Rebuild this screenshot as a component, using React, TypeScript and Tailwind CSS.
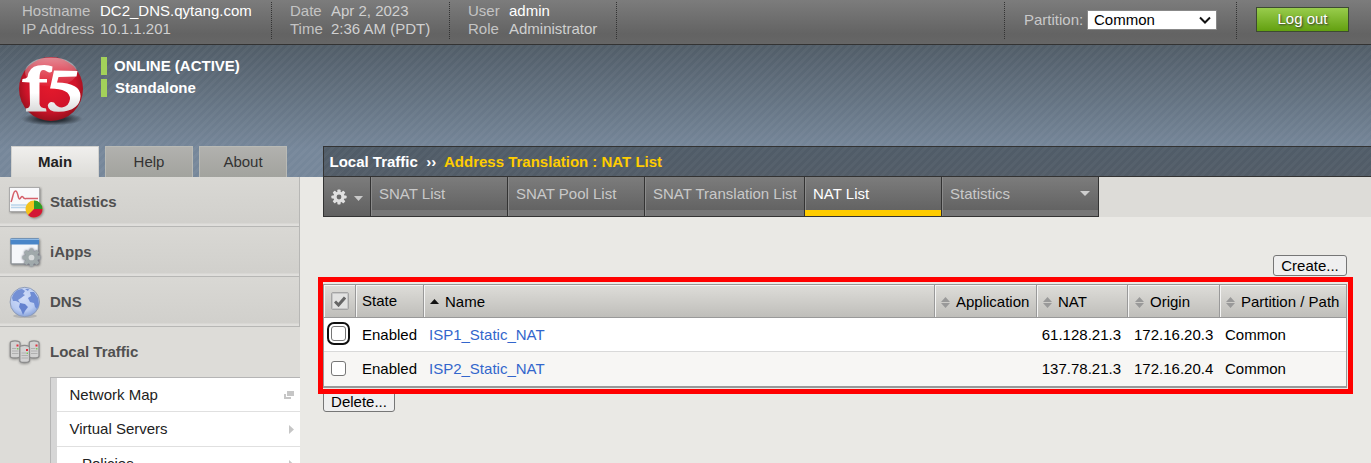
import React from "react";

const font = "font-['Liberation_Sans',Arial,sans-serif]";

function Divider() {
  return <div className="mt-[2px] h-[37px] w-0 shrink-0 border-l border-dotted border-[#333]" />;
}

function Pair({ k, v, kw, strong }: { k: string; v: string; kw: string; strong?: boolean }) {
  return (
    <div className="flex h-[18px] leading-[18px]">
      <span className={`${kw} text-[#c4c4c4]`}>{k}</span>
      <span className={strong ? "text-white" : "text-[#d0d0d0]"}>{v}</span>
    </div>
  );
}

function Logo() {
  return (
    <svg width="70" height="76" viewBox="0 0 70 76">
      <defs>
        <radialGradient id="ball" cx="0.5" cy="0.45" r="0.55">
          <stop offset="0" stopColor="#e51a2c" />
          <stop offset="0.7" stopColor="#d0142a" />
          <stop offset="1" stopColor="#97101c" />
        </radialGradient>
        <linearGradient id="shine" x1="0" y1="0" x2="0" y2="1">
          <stop offset="0" stopColor="#fff" stopOpacity="0.5" />
          <stop offset="1" stopColor="#fff" stopOpacity="0.03" />
        </linearGradient>
        <linearGradient id="ink" x1="0" y1="0" x2="0" y2="1">
          <stop offset="0" stopColor="#fff" />
          <stop offset="0.6" stopColor="#fff" />
          <stop offset="1" stopColor="#d9d9d9" />
        </linearGradient>
        <radialGradient id="shade">
          <stop offset="0.4" stopColor="#20262c" stopOpacity="0.9" />
          <stop offset="1" stopColor="#20262c" stopOpacity="0" />
        </radialGradient>
      </defs>
      <ellipse cx="36" cy="65" rx="31" ry="6.500" fill="url(#shade)" />
      <circle cx="35" cy="35" r="32" fill="url(#ball)" />
      <ellipse cx="35" cy="18" rx="26" ry="14.500" fill="url(#shine)" />
      <path
        d="M6 28L6.500 25Q10 25 11.500 23Q13 13 22 11.500Q31 10 36.500 12.500L36 17.500Q34 19.500 31 17.500Q27 15 25 17Q23.500 19 23.500 25L31 25L31 28.500L23.500 28.500L23.500 50Q24 54 30 54.500L30.500 57.500L10 57.500L10 54.500Q14 54 14 50L13.500 28.500Z"
        fill="url(#ink)"
      />
      <path
        d="M38 16.500L61.500 17L60.500 22.500L42.500 23L41 28.500Q64.500 29 64.500 42Q64 57 43 57.800Q32 58 31.800 51.500Q33 46.500 38 48.500Q41 53.500 46 53.500Q53 52.500 54 45Q54 34.500 34 34.500Z"
        fill="url(#ink)"
      />
    </svg>
  );
}

function StatsIcon() {
  return (
    <svg width="36" height="34" viewBox="0 0 36 34" className="[filter:drop-shadow(1px_1px_1px_rgba(0,0,0,0.35))]">
      <rect x="1.500" y="2.500" width="30" height="24" fill="#f8f9fb" stroke="#aaa" />
      <path d="M3 20H30M3 22.500H30" stroke="#b9d4ea" strokeWidth="1.500" />
      <path d="M3 17C5 13 5 6 7.500 6S10 14 11.500 14S13 10 15 12C16 15 18 13 20 13.500H30" fill="none" stroke="#d5606a" strokeWidth="1.500" />
      <circle cx="26" cy="24" r="8.500" fill="#f3c21c" />
      <path d="M26 24V15.500A8.500 8.500 0 0 1 34.500 24Z" fill="#2c9c28" />
      <path d="M26 24H34.500A8.500 8.500 0 0 1 20 30Z" fill="#d31735" />
    </svg>
  );
}

function Gear({ size, color, hole }: { size: number; color: string; hole: string }) {
  return (
    <svg width={size} height={size} viewBox="-10 -10 20 20">
      {[0, 45, 90, 135].map((a) => (
        <rect key={a} x="-2" y="-9.500" width="4" height="19" rx="1" fill={color} transform={`rotate(${a})`} />
      ))}
      <circle r="7" fill={color} />
      <circle r="3" fill={hole} />
    </svg>
  );
}

function AppsIcon() {
  return (
    <div className="relative h-[34px] w-9">
      <svg width="36" height="34" viewBox="0 0 36 34" className="[filter:drop-shadow(1px_1px_1px_rgba(0,0,0,0.35))]">
        <rect x="3" y="4" width="27.500" height="25" rx="1" fill="#f5f7fa" stroke="#8f9498" strokeWidth="1.500" />
        <rect x="2.500" y="3.500" width="28.500" height="6" fill="#4a86c8" />
        <path d="M2.500 4.500H31" stroke="#8db9e6" />
      </svg>
      <div className="absolute left-[14px] top-[13px] [filter:drop-shadow(0_0_1px_#667)]">
        <Gear size={19} color="#a0a9ab" hole="#d7dadb" />
      </div>
    </div>
  );
}

function GlobeIcon() {
  return (
    <svg width="36" height="34" viewBox="0 0 36 34">
      <defs>
        <radialGradient id="sea" cx="0.45" cy="0.35" r="0.65">
          <stop offset="0" stopColor="#d2def8" />
          <stop offset="0.7" stopColor="#b9cbf2" />
          <stop offset="1" stopColor="#8ba5dc" />
        </radialGradient>
      </defs>
      <ellipse cx="17" cy="31" rx="12" ry="2" fill="#b4b4b4" />
      <circle cx="16.800" cy="17" r="14.700" fill="url(#sea)" stroke="#8f9cb5" />
      <path d="M4 13C5 8 9 4 14 4L17 6L15 9L17 10L13 13L10 15L12 18L8 16L5 16Z" fill="#7490d4" />
      <path d="M12 18L17 19L20 22L17 26L15 30L13 25L11 22Z" fill="#6482cf" />
      <path d="M22 7L26 7L30 13L31 20L29 24L27 22L26 18L22 17L20 13L23 11Z" fill="#6f8cd4" />
      <path d="M17 4L21 4L20 6Z" fill="#7490d4" />
    </svg>
  );
}

function ServersIcon() {
  const box = (x: number, y: number) => (
    <g transform={`translate(${x} ${y})`}>
      <path d="M0.800 16V3Q0.800 0.800 5.500 0.800T10.500 3V16Q10.500 18 5.500 18T0.800 16Z" fill="#d2d2d2" stroke="#8d8d8d" strokeWidth="1.300" />
      <path d="M2.500 8.500H7M2.500 11H9M2.500 13.500H9" stroke="#b0b0b0" />
      <rect x="7" y="4.500" width="2" height="2" fill="#e0303c" />
      <rect x="7.500" y="8" width="1.500" height="1.500" fill="#7dc860" />
    </g>
  );
  return (
    <svg width="36" height="34" viewBox="0 0 36 34" className="[filter:drop-shadow(0_1px_1px_rgba(0,0,0,0.3))]">
      {box(1.5, 5)}
      {box(20.5, 5)}
      {box(11, 9.5)}
    </svg>
  );
}

function SideItem({ icon, label, open }: { icon: React.ReactNode; label: string; open?: boolean }) {
  return (
    <div
      className={
        open
          ? "flex h-[50px] items-center pl-2"
          : "flex h-[50px] items-center border-b border-[#b7b7b5] bg-[linear-gradient(#d9d8d4,#d1d0cc_46px,#dfdedb_47px,#dfdedb)] pl-2"
      }
    >
      {icon}
      <span className="ml-[6px] font-bold text-[#505050]">{label}</span>
    </div>
  );
}

function MenuTab({ label, width, active, arrow }: { label: string; width: string; active?: boolean; arrow?: boolean }) {
  return (
    <div className={`${width} flex h-[39px] shrink-0 flex-col border-r border-[#333]`}>
      <div className={`flex h-[33px] shrink-0 items-center justify-between bg-[linear-gradient(#7c7c7c,#636363)] pl-2 pr-2 shadow-[inset_1px_0_#8b8b8b] ${active ? "text-white" : "text-[#c9c9c9]"}`}>
        <span className="whitespace-nowrap pt-px">{label}</span>
        {arrow && (
          <svg width="10" height="5" viewBox="0 0 10 5">
            <path d="M0 0H10L5 5Z" fill="#cfcfcf" />
          </svg>
        )}
      </div>
      <div className={active ? "h-[6px] shrink-0 bg-[#ffcc00]" : "h-[6px] shrink-0 bg-[#777] shadow-[inset_1px_0_#8b8b8b]"} />
    </div>
  );
}

function Sort() {
  return (
    <svg width="9" height="11" viewBox="0 0 9 11" className="mr-[6px] shrink-0">
      <path d="M0 5L4.500 0L9 5ZM0 6H9L4.500 11Z" fill="#999" />
    </svg>
  );
}

const headCell =
  "flex h-[33px] items-center border-b border-r border-[#999] bg-[linear-gradient(#deddd9,#bfbeba)] shadow-[inset_1px_1px_#f5f5f4] whitespace-nowrap";
const cols = "grid grid-cols-[32px_68px_511px_102px_91px_92px_126px]";

function Row({ name, nat, origin, alt, focus }: { name: string; nat: string; origin: string; alt?: boolean; focus?: boolean }) {
  return (
    <div className={`${cols} h-[34px] items-center ${alt ? "bg-[#f7f6f4]" : "border-b border-[#d9d9d9] bg-white"}`}>
      <div className="flex">
        <div
          className={`ml-[7px] mb-[2px] size-[15px] rounded-[3px] border border-[#767676] bg-white ${
            focus ? "outline-2 outline-offset-2 outline-[#101010]" : ""
          }`}
        />
      </div>
      <div className="pl-[6px]">Enabled</div>
      <div className="pl-[5px] text-[#3366cc]">{name}</div>
      <div />
      <div className="pr-[7px] text-right">{nat}</div>
      <div className="pl-[6px]">{origin}</div>
      <div className="pl-[5px]">Common</div>
    </div>
  );
}

export default function App() {
  return (
    <div className={`${font} relative flex h-[463px] w-[1371px] flex-col overflow-hidden bg-[#eae9e5] text-[15px] leading-[18px] text-black`}>
      <header className="flex h-[45px] shrink-0 border-b border-[#333] bg-[linear-gradient(#7c7c7c,#636363_34px,#666)]">
        <div className="w-[271px] pl-[22px] pt-[2px]">
          <Pair k="Hostname" v="DC2_DNS.qytang.com" kw="w-[78px]" strong />
          <Pair k="IP Address" v="10.1.1.201" kw="w-[78px]" />
        </div>
        <Divider />
        <div className="w-[177px] pl-[18px] pt-[2px]">
          <Pair k="Date" v="Apr 2, 2023" kw="w-[41px]" />
          <Pair k="Time" v="2:36 AM (PDT)" kw="w-[41px]" />
        </div>
        <Divider />
        <div className="w-[166px] pl-[18px] pt-[2px]">
          <Pair k="User" v="admin" kw="w-[41px]" strong />
          <Pair k="Role" v="Administrator" kw="w-[41px]" />
        </div>
        <Divider />
        <div className="flex-1" />
        <Divider />
        <div className="flex w-[231px] pl-[19px] pt-[10px]">
          <span className="w-[63px] pt-px text-[#c9c9c9]">Partition:</span>
          <div className="flex h-[20px] w-[130px] items-center justify-between border border-[#888] bg-white pl-[6px] pr-[5px]">
            <span>Common</span>
            <svg width="12" height="8" viewBox="0 0 12 8">
              <path d="M1 1.500L6 6.500L11 1.500" fill="none" stroke="#111" strokeWidth="2" />
            </svg>
          </div>
        </div>
        <Divider />
        <div className="w-[134px] pl-[19px] pt-[7px]">
          <div className="flex h-[25px] w-[93px] items-center justify-center border border-[#3d4a33] bg-[linear-gradient(#98cc4c,#63a010)] pb-px text-white [text-shadow:1px_1px_2px_#333]">
            Log out
          </div>
        </div>
      </header>

      <div className="flex flex-1 bg-[repeating-linear-gradient(135deg,rgba(255,255,255,0.035)_0_2.828px,transparent_2.828px_5.657px),linear-gradient(#515d68,#76879a_105px)] bg-[length:100%_132px] bg-no-repeat">
        <aside className="flex w-[300px] shrink-0 flex-col">
          <div className="flex h-[101px] items-start pl-4 pt-[9px]">
            <Logo />
            <div className="ml-[15px] flex flex-col gap-1 pt-[3px] font-bold text-white">
              <div className="h-[18px] border-l-[6px] border-[#a3d15a] pl-[7px]">ONLINE (ACTIVE)</div>
              <div className="h-[18px] border-l-[6px] border-[#a3d15a] pl-[8px]">Standalone</div>
            </div>
          </div>
          <div className="flex h-[31px] gap-[6px] pl-[11px] text-[#333]">
            <div className="flex w-[88px] items-center justify-center border border-b-0 border-[#d0d0cd] bg-[linear-gradient(#f0efed,#dddcd8)] font-bold text-[#222]">Main</div>
            <div className="flex w-[88px] items-center justify-center border border-b-0 border-[#b9bab5] bg-[linear-gradient(#b1b1ae,#a2a39e)]">Help</div>
            <div className="flex w-[88px] items-center justify-center border border-b-0 border-[#b9bab5] bg-[linear-gradient(#b1b1ae,#a2a39e)]">About</div>
          </div>
          <nav className="flex-1 bg-[#dddcd8]">
            <div className="border-r border-[#b7b7b5]">
              <SideItem icon={<StatsIcon />} label="Statistics" />
              <SideItem icon={<AppsIcon />} label="iApps" />
              <SideItem icon={<GlobeIcon />} label="DNS" />
            </div>
            <SideItem icon={<ServersIcon />} label="Local Traffic" open />
            <div className="ml-[50px] h-[90px] border-l border-t border-[#b5b5b5] bg-[#d6d6d6] pl-[6px] text-[#222]">
              <div className="flex h-[34px] items-center justify-between border-b border-[#e0e0e0] bg-white pl-[12.500px] pr-[6px]">
                Network Map
                <svg width="10" height="8" viewBox="0 0 10 8">
                  <path d="M3 0H10V5H3ZM0 3H2V6H7V8H0Z" fill="#c6c6c6" />
                </svg>
              </div>
              <div className="flex h-[35px] items-center justify-between border-b border-[#e0e0e0] bg-white pl-[12.500px] pr-[6px]">
                Virtual Servers
                <svg width="5" height="9" viewBox="0 0 5 9">
                  <path d="M0 0L5 4.500L0 9Z" fill="#c6c6c6" />
                </svg>
              </div>
              <div className="flex h-[34px] items-center justify-between bg-white pl-[25px] pr-[6px]">
                Policies
                <svg width="5" height="9" viewBox="0 0 5 9">
                  <path d="M0 0L5 4.500L0 9Z" fill="#c6c6c6" />
                </svg>
              </div>
            </div>
          </nav>
        </aside>

        <main className="flex min-w-0 flex-1 flex-col pl-[23px] pt-[101px]">
          <div className="flex h-[31px] shrink-0 items-center border border-r-0 border-[#333] bg-[repeating-linear-gradient(135deg,rgba(255,255,255,0.03)_0_2.828px,transparent_2.828px_5.657px),linear-gradient(#505c68,#525c67)] pl-[5.500px] font-bold">
            <span className="w-[114.500px] whitespace-pre text-white">Local Traffic{"  "}››</span>
            <span className="text-[#ffcc00]">Address Translation : NAT List</span>
          </div>
          <div className="flex h-10 shrink-0 bg-[#dddcd8]">
            <div className="flex w-[776px] border-b border-l border-[#333] bg-[#777]">
              <div className="flex w-[47px] shrink-0 items-center border-r border-[#333] bg-[linear-gradient(#7c7c7c,#606060)] pl-[7px] pt-px">
                <Gear size={16} color="#e0e0e0" hole="#6b6b6b" />
                <svg width="9" height="5" viewBox="0 0 9 5" className="ml-[7px] mt-[3px]">
                  <path d="M0 0H9L4.500 5Z" fill="#c9c9c9" />
                </svg>
              </div>
              <MenuTab label="SNAT List" width="w-[137px]" />
              <MenuTab label="SNAT Pool List" width="w-[137px]" />
              <MenuTab label="SNAT Translation List" width="w-[160px]" />
              <MenuTab label="NAT List" width="w-[137px]" active />
              <MenuTab label="Statistics" width="w-[157px]" arrow />
            </div>
          </div>
          <div className="flex justify-end pr-6 pt-[38px]">
            <div className="flex h-[21px] w-[74px] items-center justify-center rounded-[3px] border border-[#767676] bg-[#efefef]">Create...</div>
          </div>
          <div className="mt-2 w-[1024px] border border-b-2 border-[#999]">
            <div className={cols}>
              <div className={headCell}>
                <div className="ml-[7px] flex size-[18px] items-center justify-center rounded-[2px] border border-[#a4a4a4] bg-[#e2e2e1] shadow-[inset_0_0_0_1px_#c8c8c8]">
                  <svg width="12" height="11" viewBox="0 0 12 11">
                    <path d="M1 5.500L4.500 9L11 1.500" fill="none" stroke="#666" strokeWidth="3" />
                  </svg>
                </div>
              </div>
              <div className={`${headCell} pl-[6px]`}>State</div>
              <div className={`${headCell} pl-[6px] pt-[2px]`}>
                <svg width="9" height="5" viewBox="0 0 9 5" className="mb-[2px] mr-[6px]">
                  <path d="M0 5L4.500 0L9 5Z" fill="#111" />
                </svg>
                Name
              </div>
              <div className={`${headCell} pl-[6px] pt-[2px]`}><Sort />Application</div>
              <div className={`${headCell} pl-[6px] pt-[2px]`}><Sort />NAT</div>
              <div className={`${headCell} pl-[7px] pt-[2px]`}><Sort />Origin</div>
              <div className={`${headCell} border-r-0 pl-[6px] pt-[2px]`}><Sort />Partition / Path</div>
            </div>
            <Row name="ISP1_Static_NAT" nat="61.128.21.3" origin="172.16.20.3" focus />
            <Row name="ISP2_Static_NAT" nat="137.78.21.3" origin="172.16.20.4" alt />
          </div>
          <div className="mt-[3px] flex h-[21px] w-[72px] items-center justify-center rounded-[3px] border border-[#767676] bg-[#efefef]">Delete...</div>
        </main>
      </div>
      <div className="pointer-events-none absolute left-[318px] top-[277px] h-[117px] w-[1035px] border-[5px] border-[#ff0000]" />
    </div>
  );
}
